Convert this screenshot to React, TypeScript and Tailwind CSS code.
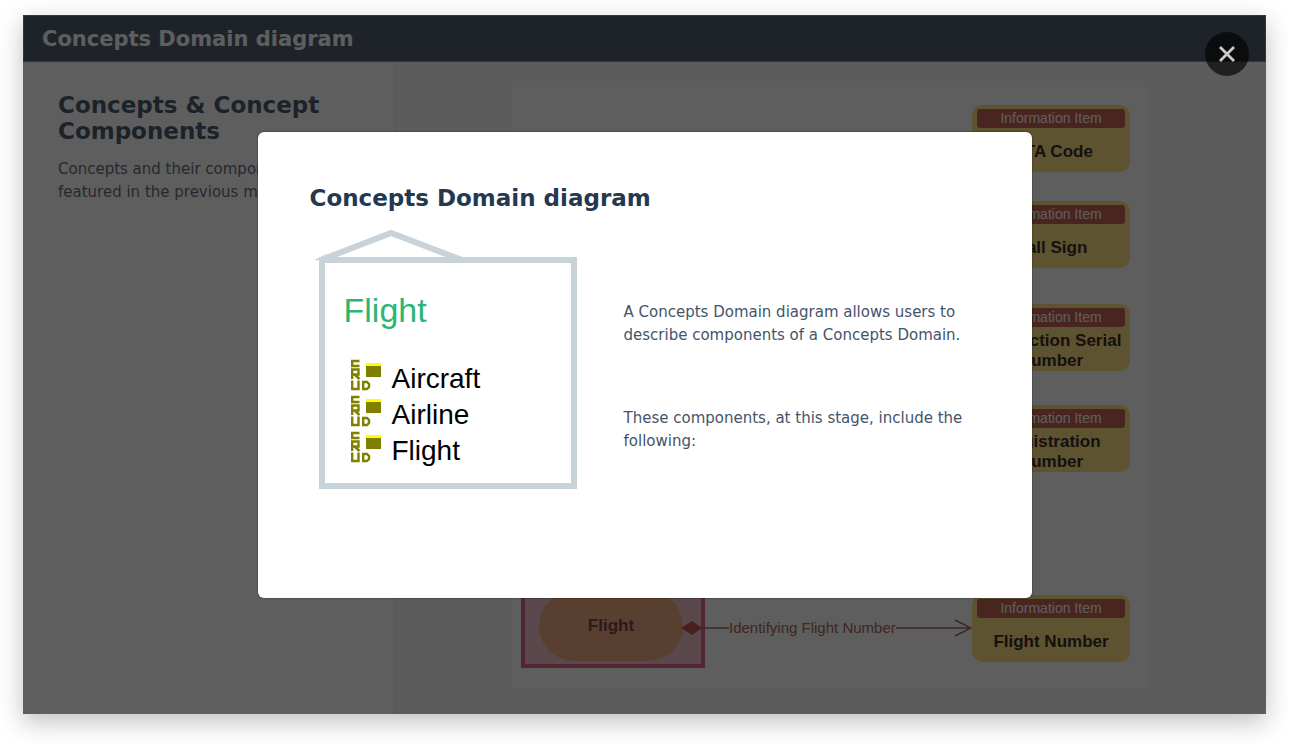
import React from "react";

const informationItems = [
  { name: "IATA Code", place: "mt-[18px]" },
  { name: "Call Sign", place: "mt-[29px]" },
  { name: "Production Serial Number", place: "mt-9" },
  { name: "Registration Number", place: "mt-[34px]" },
  { name: "Flight Number", place: "mt-[123px]" },
];

const components = ["Aircraft", "Airline", "Flight"];

function InformationItem({ name, place }: { name: string; place: string }) {
  return (
    <div className={`h-[67px] shrink-0 rounded-[10px] bg-[#fce183] px-[5px] pt-1 font-['Liberation_Sans',sans-serif] ${place}`}>
      <div className="h-[19px] rounded-[3px] bg-[#c66656] text-center text-[14px] leading-[19px] text-white">
        Information Item
      </div>
      <div className="mt-1 flex h-10 items-center justify-center text-center text-[17px] leading-5 font-bold text-[#3b3028]">
        {name}
      </div>
    </div>
  );
}

function CrudIcon() {
  return (
    <svg viewBox="0 0 32 32" className="h-8 w-8" aria-hidden="true">
      <g fill="none" stroke="#808000" strokeWidth="2.4">
        <path d="M9.5 2H2.2V7H9.5" />
        <path d="M2.2 20V10.5H8.5V15.5H3M4.5 15.5L9.5 20" />
        <path d="M2.2 21.5V30H8.5V21.5" />
        <path d="M13.2 23H17L19 25V28L17 30H13.2Z" />
      </g>
      <rect x="16" y="4" width="15" height="4" fill="#ffff00" />
      <rect x="16" y="7" width="15" height="11" fill="#808000" />
    </svg>
  );
}

function DomainFigure() {
  return (
    <div className="w-[258px] shrink-0 font-['Liberation_Sans',sans-serif]">
      <svg viewBox="0 0 258 27" className="block h-[27px] w-full overflow-visible" aria-hidden="true">
        <path d="M2 30L72 3L143 30" fill="none" stroke="#c8d2d9" strokeWidth="6" />
        <path d="M-5 30L8 24V31Z" fill="#c8d2d9" />
      </svg>
      <div className="h-[232px] border-6 border-[#c8d2d9] px-[19px] pt-[27px]">
        <div className="text-[34px] leading-10 text-[#2bb673]">Flight</div>
        <ul className="mt-[27px] pl-[6px]">
          {components.map((name) => (
            <li key={name} className="flex h-9 items-center gap-[10px] text-[28px] leading-9 text-black">
              <CrudIcon />
              <span className="pt-2">{name}</span>
            </li>
          ))}
        </ul>
      </div>
    </div>
  );
}

export default function App() {
  return (
    <div className="flex min-h-screen bg-white px-[23px] pt-[15px] pb-[31px] font-['DejaVu_Sans',sans-serif]">
      <div className="relative flex flex-1 flex-col bg-white shadow-[0_8px_24px_rgba(0,0,0,0.25)]">
        <header className="flex h-[47px] items-center border border-[#8f9499] bg-[#505f70] px-[18px] pt-[2px]">
          <h1 className="text-[21px] font-bold text-white">Concepts Domain diagram</h1>
        </header>
        <main className="flex flex-1">
          <aside className="w-[373px] shrink-0 border-r border-[#e4e4e4] px-[35px] pt-[30px]">
            <h2 className="text-[23px] leading-[26px] font-bold text-[#4e5e73]">Concepts &amp; Concept Components</h2>
            <p className="mt-[14px] text-[15px] leading-[23px] text-[#66717f]">
              Concepts and their components featured in the previous model
            </p>
          </aside>
          <section className="flex flex-1 bg-[#fafafa] pt-[25px] pb-[26px] pl-[116px]">
            <div className="flex w-[637px] shrink-0 items-end bg-white pl-[9px]">
              <div className="mb-5 flex h-[88px] w-[184px] shrink-0 border-4 border-[#e0688e] bg-[#f3c4d0] pt-[7px] pr-[18px] pb-[3px] pl-[14px]">
                <div className="flex flex-1 items-center justify-center rounded-full bg-[#f0ac80] text-[17px] font-bold text-[#754456] font-['Liberation_Sans',sans-serif]">
                  Flight
                </div>
              </div>
              <div className="relative -ml-6 mb-[47px] flex w-[291px] shrink-0 items-center text-[#a8685a]">
                <svg viewBox="0 0 48 26" className="h-[26px] w-12 shrink-0" aria-hidden="true">
                  <path d="M20 13H48" stroke="currentColor" strokeWidth="1.5" />
                  <path d="M0 13L11 6L21 13L11 20Z" fill="#c45858" />
                </svg>
                <span className="shrink-0 font-['Liberation_Sans',sans-serif] text-[15px] whitespace-nowrap">
                  Identifying Flight Number
                </span>
                <svg viewBox="0 0 76 26" className="h-[26px] w-[76px] shrink-0" fill="none" stroke="currentColor" strokeWidth="1.5" aria-hidden="true">
                  <path d="M0 13H75M59 5L75 13L59 21" />
                </svg>
              </div>
              <div className="w-[158px] shrink-0 self-start">
                {informationItems.map((item) => (
                  <InformationItem key={item.name} {...item} />
                ))}
              </div>
            </div>
          </section>
        </main>

        <div className="absolute inset-0 flex items-center justify-center bg-black/63">
          <div role="dialog" aria-modal="true" aria-labelledby="dialog-title" className="w-[774px] rounded-md bg-white px-[52px] pt-[53px] pb-[109px] shadow-[0_0_2px_rgba(0,0,0,0.6)]">
            <h2 id="dialog-title" className="text-[23px] leading-[26px] font-bold text-[#243850]">Concepts Domain diagram</h2>
            <div className="mt-[19px] flex pl-[9px]">
              <DomainFigure />
              <div className="mt-[71px] ml-[47px] flex flex-1 flex-col gap-[60px] text-[15px] leading-[23px] text-[#44546a]">
                <p>A Concepts Domain diagram allows users to describe components of a Concepts Domain.</p>
                <p>These components, at this stage, include the following:</p>
              </div>
            </div>
          </div>
          <button type="button" aria-label="Close" className="absolute top-[17px] right-[17px] flex h-11 w-11 items-center justify-center rounded-full bg-black/65">
            <svg viewBox="0 0 16 16" className="h-4 w-4" fill="none" stroke="#cccccc" strokeWidth="2.8" aria-hidden="true">
              <path d="M1 1L15 15M15 1L1 15" />
            </svg>
          </button>
        </div>
      </div>
    </div>
  );
}
